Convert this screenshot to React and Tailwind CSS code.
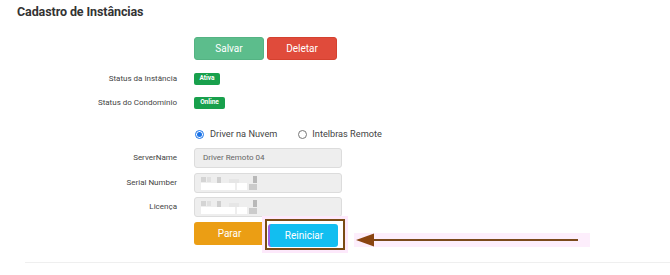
import React from "react";

function Mosaic() {
  return (
    <div className="relative w-[60px] h-[15px] -ml-[2px]">
      <span className="absolute left-[0px] top-[1px] w-[5px] h-[5px] bg-[#d4d4d4]" />
      <span className="absolute left-[6px] top-[1px] w-[4px] h-[5px] bg-[#e0e0e0]" />
      <span className="absolute left-[16px] top-[1px] w-[4px] h-[6px] bg-[#cfcfcf]" />
      <span className="absolute left-[28px] top-[3px] w-[10px] h-[4px] bg-[#e6e6e6]" />
      <span className="absolute left-[52px] top-[0px] w-[4px] h-[7px] bg-[#b8b8b8]" />
      <span className="absolute left-[0px] top-[7px] w-[34px] h-[7px] bg-white" />
      <span className="absolute left-[36px] top-[7px] w-[10px] h-[7px] bg-white" />
      <span className="absolute left-[48px] top-[8px] w-[8px] h-[6px] bg-[#cbcbcb]" />
    </div>
  );
}

function Label({ children }) {
  return (
    <div className="w-[177px] text-right text-[8px] text-[#444] leading-[12px]">
      {children}
    </div>
  );
}

function Input({ children }) {
  return (
    <div className="ml-[17px] w-[148px] h-[20px] rounded-[3px] bg-[#eeeeee] border border-[#dcdcdc] flex items-center pl-[8px] text-[8px] text-[#666]">
      {children}
    </div>
  );
}

export default function App() {
  return (
    <div className="w-[670px] h-[275px] bg-white relative overflow-hidden font-['Roboto',sans-serif]">
      <h1 className="pl-[17px] pt-[4px] text-[12.5px] font-bold leading-[16px] text-[#333] tracking-[-0.1px]">
        Cadastro de Instâncias
      </h1>

      <div className="mt-[17px] flex">
        <div className="w-[177px]" />
        <div className="ml-[17px] flex gap-[3px]">
          <button className="w-[70px] h-[23px] rounded-[3px] bg-[#5cbd8c] text-white text-[10px] border border-[#54b383]">
            Salvar
          </button>
          <button className="w-[70px] h-[23px] rounded-[3px] bg-[#e04b3b] text-white text-[10px] border border-[#d4412f]">
            Deletar
          </button>
        </div>
      </div>

      <div className="mt-[13px] flex items-center h-[12px]">
        <Label>Status da Instância</Label>
        <span className="ml-[17px] w-[26px] h-[12px] rounded-[2px] bg-[#18a04c] text-white text-[6.5px] font-bold flex items-center justify-center">
          Ativa
        </span>
      </div>

      <div className="mt-[12px] flex items-center h-[12px]">
        <Label>Status do Condomínio</Label>
        <span className="ml-[17px] w-[31px] h-[12px] rounded-[2px] bg-[#18a04c] text-white text-[6.5px] font-bold flex items-center justify-center">
          Online
        </span>
      </div>

      <div className="mt-[19px] flex items-center h-[12px]">
        <div className="w-[177px]" />
        <div className="ml-[17px] flex items-center text-[9.2px] text-[#444]">
          <span className="ml-[1px] w-[9px] h-[9px] rounded-full border border-[#1a73e8] flex items-center justify-center">
            <span className="w-[5px] h-[5px] rounded-full bg-[#1a73e8]" />
          </span>
          <span className="ml-[6px]">Driver na Nuvem</span>
          <span className="ml-[21px] w-[9px] h-[9px] rounded-full border border-[#777]" />
          <span className="ml-[5px]">Intelbras Remote</span>
        </div>
      </div>

      <div className="mt-[8px] flex items-center">
        <Label>ServerName</Label>
        <Input>Driver Remoto 04</Input>
      </div>

      <div className="mt-[5px] flex items-center">
        <Label>Serial Number</Label>
        <Input>
          <Mosaic />
        </Input>
      </div>

      <div className="mt-[4px] flex items-center">
        <Label>Licença</Label>
        <Input>
          <Mosaic />
        </Input>
      </div>

      <div className="mt-[5px] flex">
        <div className="w-[177px]" />
        <div className="ml-[17px] flex gap-[3px]">
          <button className="w-[71px] h-[23px] rounded-[3px] bg-[#eb9e14] text-white text-[10px]">
            Parar
          </button>
          <div className="relative">
            <button className="w-[70px] h-[23px] rounded-[3px] bg-[#12bef0] text-white text-[10px] border-l-2 border-[#9a62e6]">
              Reiniciar
            </button>
            <div className="absolute left-[-3px] top-[-3px] w-[80px] h-[31px] border-2 border-[#7a4b14] shadow-[0_0_0_3px_#fde9fb]" />
          </div>
        </div>
      </div>

      <div className="mt-[15px] ml-[25px] h-px bg-[#efefef]" />

      <svg
        className="absolute left-[350px] top-[229px]"
        width="245"
        height="22"
        viewBox="0 0 245 22"
      >
        <rect x="4" y="4" width="236" height="14" fill="#fdeefc" />
        <line x1="20" y1="11" x2="228" y2="11" stroke="#7b4a1c" strokeWidth="2.2" />
        <polygon points="6,11 24,4.5 24,17.5" fill="#8a4511" />
      </svg>
    </div>
  );
}
